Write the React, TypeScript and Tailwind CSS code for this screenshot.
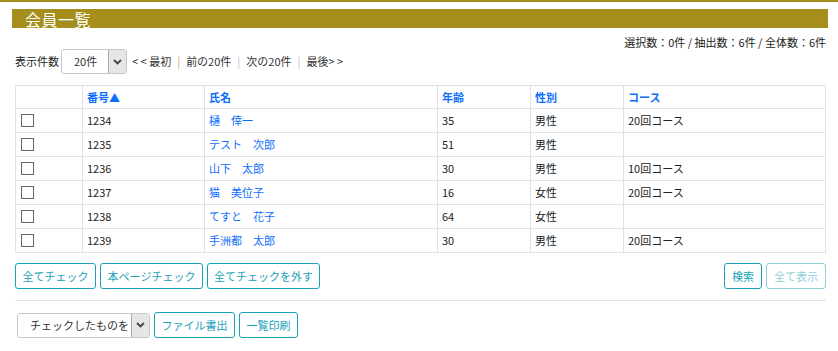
import React from "react";

const rows = [
  { no: "1234", name: "樋　倖一", age: "35", sex: "男性", course: "20回コース" },
  { no: "1235", name: "テスト　次郎", age: "51", sex: "男性", course: "" },
  { no: "1236", name: "山下　太郎", age: "30", sex: "男性", course: "10回コース" },
  { no: "1237", name: "猫　美位子", age: "16", sex: "女性", course: "20回コース" },
  { no: "1238", name: "てすと　花子", age: "64", sex: "女性", course: "" },
  { no: "1239", name: "手洲都　太郎", age: "30", sex: "男性", course: "20回コース" },
];

function Chevron() {
  return (
    <svg width="9" height="6" viewBox="0 0 9 6">
      <path d="M1 1 L4.5 4.5 L8 1" stroke="#444" strokeWidth="1.8" fill="none" />
    </svg>
  );
}

function Select({ label, width, padL }: { label: string; width: string; padL: string }) {
  return (
    <div className={`flex h-[25px] ${width} border border-[#c8c8c8] rounded-[3px] bg-white overflow-hidden`}>
      <div className={`flex-1 flex items-center whitespace-nowrap ${padL} text-[11px] text-[#333]`}>{label}</div>
      <div className="w-[18px] h-full bg-[#e6e6e6] border-l border-[#a8a8a8] flex items-center justify-center">
        <Chevron />
      </div>
    </div>
  );
}

function Btn({ children, w, faded }: { children: React.ReactNode; w: string; faded?: boolean }) {
  return (
    <button
      className={`h-[26px] ${w} rounded-[3px] border text-[11px] whitespace-nowrap flex items-center justify-center bg-white ${
        faded ? "border-[#8fd0dc] text-[#8fd0dc]" : "border-[#17a2b8] text-[#17a2b8]"
      }`}
    >
      {children}
    </button>
  );
}

export default function App() {
  const th = "border border-[#dee2e6] px-[4px] text-left font-bold text-[#0d6efd] h-[23px]";
  const td = "border border-[#dee2e6] px-[4px] text-[#222] h-[24px]";
  return (
    <div
      className="w-[838px] h-[351px] bg-white text-[11px] text-[#222] relative"
      style={{ fontFamily: '"Noto Sans CJK JP", "Noto Sans", sans-serif' }}
    >
      <div className="h-[2px] bg-[#a58e1b]" />
      <div className="mt-[7px] ml-[12px] w-[816px] h-[19px] bg-[#a58e1b] flex items-center pl-[13px]">
        <span className="text-white text-[16px] leading-none tracking-[0.5px]">会員一覧</span>
      </div>
      <div className="flex justify-end pr-[12px] mt-[6px] h-[16px] leading-[16px] text-[11px] text-[#222]">
        選択数：0件 / 抽出数：6件 / 全体数：6件
      </div>
      <div className="flex items-center ml-[15px] mt-[-1px] h-[25px]">
        <span className="text-[11px] mr-[2px]">表示件数</span>
        <Select label="20件" width="w-[66px]" padL="pl-[12px]" />
        <div className="flex items-center ml-[5px] text-[11px] text-[#333]">
          <span>&lt; &lt; 最初</span>
          <span className="mx-[6px] text-[#c9a877]">|</span>
          <span>前の20件</span>
          <span className="mx-[6px] text-[#9fc3d8]">|</span>
          <span>次の20件</span>
          <span className="mx-[6px] text-[#bbb]">|</span>
          <span>最後&gt; &gt;</span>
        </div>
      </div>
      <div className="ml-[15px] mt-[11px] w-[811px]">
        <table className="w-full border-collapse text-[11px] table-fixed">
          <colgroup>
            <col className="w-[67px]" />
            <col className="w-[122px]" />
            <col className="w-[233px]" />
            <col className="w-[93px]" />
            <col className="w-[93px]" />
            <col />
          </colgroup>
          <thead>
            <tr>
              <th className={th}></th>
              <th className={th}>番号▲</th>
              <th className={th}>氏名</th>
              <th className={th}>年齢</th>
              <th className={th}>性別</th>
              <th className={th}>コース</th>
            </tr>
          </thead>
          <tbody>
            {rows.map((r) => (
              <tr key={r.no}>
                <td className={td}>
                  <div className="w-[13px] h-[13px] border border-[#666] bg-white ml-[1px]" />
                </td>
                <td className={td}>{r.no}</td>
                <td className={`${td} !text-[#0d6efd]`}>{r.name}</td>
                <td className={td}>{r.age}</td>
                <td className={td}>{r.sex}</td>
                <td className={td}>{r.course}</td>
              </tr>
            ))}
          </tbody>
        </table>
      </div>
      <div className="flex ml-[15px] w-[811px] mt-[10px] items-center">
        <div className="flex gap-[4px]">
          <Btn w="w-[81px]">全てチェック</Btn>
          <Btn w="w-[103px]">本ページチェック</Btn>
          <Btn w="w-[113px]">全てチェックを外す</Btn>
        </div>
        <div className="flex gap-[4px] ml-auto">
          <Btn w="w-[38px]">検索</Btn>
          <Btn w="w-[60px]" faded>全て表示</Btn>
        </div>
      </div>
      <div className="ml-[15px] w-[811px] mt-[11px] h-[1px] bg-[#dee2e6]" />
      <div className="flex ml-[17px] mt-[11px] gap-[4px] items-center">
        <Select label="チェックしたものを" width="w-[133px]" padL="pl-[12px]" />
        <Btn w="w-[81px]">ファイル書出</Btn>
        <Btn w="w-[59px]">一覧印刷</Btn>
      </div>
    </div>
  );
}
